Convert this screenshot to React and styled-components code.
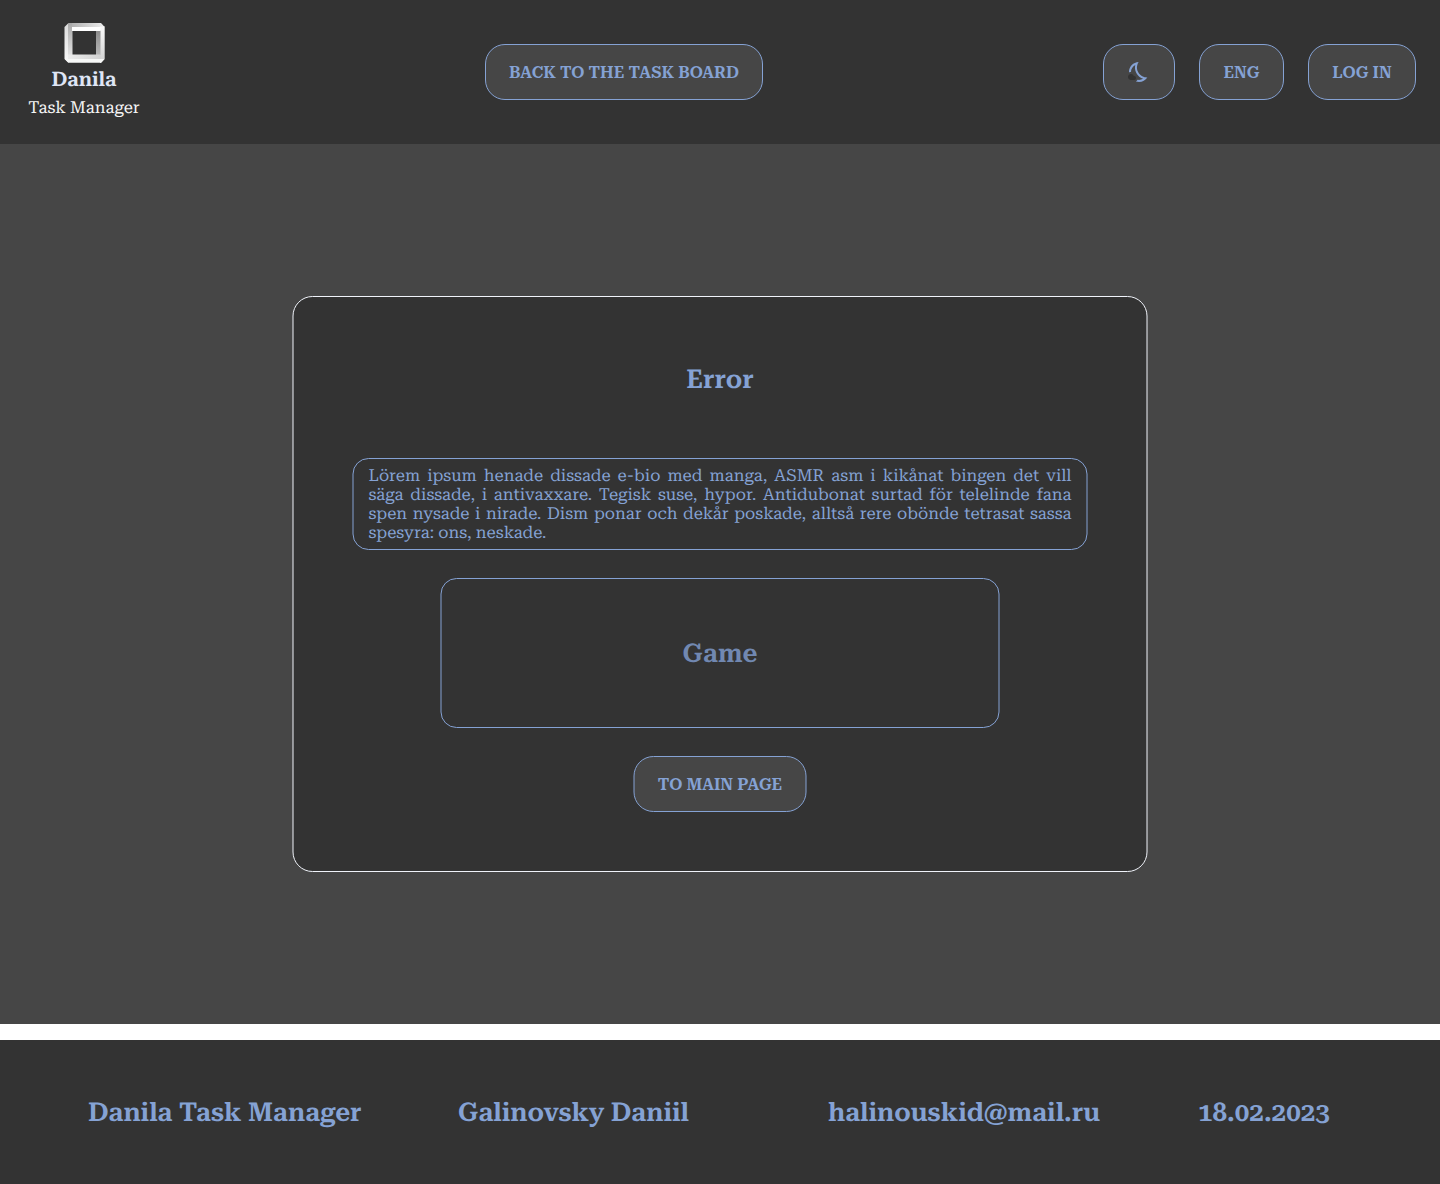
import React from "react";
import styled, { createGlobalStyle } from "styled-components";

const color = {
  panel: "#333333",
  page: "#464646",
  accent: "#85a2d4",
  light: "#dfe5f5",
};

const GlobalStyle = createGlobalStyle`
  *, *::before, *::after { box-sizing: border-box; }
  body {
    margin: 0;
    background: #fff;
    color: ${color.accent};
    font-family: "Roboto Serif", "DejaVu Serif Condensed", "DejaVu Serif", serif;
    text-rendering: geometricPrecision;
  }
  h1, h2, p { margin: 0; }
`;

const Page = styled.div`
  display: flex;
  flex-direction: column;
  height: 1184px;
`;

const Header = styled.header`
  display: flex;
  align-items: center;
  justify-content: space-between;
  height: 144px;
  padding: 0 24px;
  background: ${color.panel};
`;

const Brand = styled.div`
  display: flex;
  flex-direction: column;
  align-items: center;
  width: 121px;
  height: 98px;
`;

const BrandName = styled.span`
  margin-top: 4px;
  margin-right: 1px;
  font-size: 20px;
  font-weight: 600;
  line-height: 24px;
  color: ${color.light};
`;

const BrandCaption = styled.span`
  margin-top: 8px;
  margin-right: 1px;
  font-size: 16.67px;
  line-height: 19px;
  white-space: nowrap;
  color: #f5f5f5;
`;

const Actions = styled.div`
  display: flex;
  gap: 24px;
`;

const Button = styled.button`
  display: flex;
  align-items: center;
  justify-content: center;
  width: ${(p) => p.$width}px;
  height: 56px;
  padding: 1px 0 0;
  border: 1px solid ${color.accent};
  border-radius: 20px;
  background: ${color.page};
  color: ${color.accent};
  font-family: inherit;
  font-size: 16.4px;
  font-weight: 600;
  line-height: 19px;
  text-transform: uppercase;
  white-space: nowrap;

  svg {
    margin-bottom: 1px;
  }
`;

const Main = styled.main`
  display: flex;
  align-items: center;
  height: 880px;
  padding-left: 292px;
  background: ${color.page};
`;

const Card = styled.section`
  display: flex;
  flex-direction: column;
  align-items: center;
  gap: 28px;
  width: 855px;
  height: 576px;
  padding-top: 59px;
  border: 1px solid #f0f3fa;
  border-radius: 20px;
  background: ${color.panel};
  transform: translateX(0.5px);
`;

const Title = styled.h1`
  height: 74px;
  font-size: 26px;
  font-weight: 600;
  line-height: 48px;
`;

const Message = styled.div`
  width: 735px;
  height: 92px;
  padding: 8px 15px 6px;
  border: 1px solid ${color.accent};
  border-radius: 16px;
  font-size: 16.67px;
  line-height: 19px;
`;

const Line = styled.p`
  height: 19px;
  text-align: justify;
  text-align-last: ${(p) => (p.$last ? "left" : "justify")};
`;

const GameBox = styled.div`
  display: flex;
  align-items: center;
  justify-content: center;
  width: 559px;
  height: 150px;
  padding-top: 2px;
  border: 1px solid ${color.accent};
  border-radius: 16px;
`;

const GameTitle = styled.h2`
  font-size: 26px;
  font-weight: 600;
  line-height: 30px;
  color: #7188b1;
`;

const Footer = styled.footer`
  display: grid;
  grid-template-columns: repeat(4, 370px);
  align-items: center;
  height: 144px;
  margin-top: 16px;
  padding: 2px 0 0 88px;
  overflow: hidden;
  background: ${color.panel};
`;

const FooterItem = styled.span`
  font-size: 26px;
  font-weight: 600;
  line-height: 30px;
  white-space: nowrap;
`;

const LogoSvg = styled.svg`
  display: block;
  flex: none;
`;

const Gradient = ({ id, from, to, vertical }) => (
  <linearGradient id={id} x1="0" y1="0" x2={vertical ? 0 : 1} y2={vertical ? 1 : 0}>
    <stop offset="0" stopColor={from} />
    <stop offset="1" stopColor={to} />
  </linearGradient>
);

const Logo = () => (
  <LogoSvg width="41" height="40" viewBox="0 0 41 40">
    <defs>
      <Gradient id="top" from="#b2b2b2" to="#efefef" />
      <Gradient id="right" from="#fafafa" to="#d0d0d0" vertical />
      <Gradient id="rightIn" from="#8a8a8a" to="#b8b8b8" vertical />
      <Gradient id="left" from="#dcdcdc" to="#fafafa" vertical />
      <Gradient id="leftIn" from="#a8a8a8" to="#e2e2e2" vertical />
      <Gradient id="bottom" from="#ececec" to="#d2d2d2" />
    </defs>
    <path d="M4.5 0V40L.5 36V4Z" fill="url(#left)" />
    <path d="M4 .5L4.5 0H8.5V32H4Z" fill="url(#leftIn)" />
    <path d="M8 0H37L40.7 4H8Z" fill="url(#top)" />
    <path d="M36 3.5H40.7V36L37 40H36Z" fill="url(#right)" />
    <path d="M32 7.5H36.5V32H32Z" fill="url(#rightIn)" />
    <path d="M8 4H36.5V8H8Z" fill="#ffffff" />
    <path d="M4 31.5H36.5V36.5H4Z" fill="url(#bottom)" />
    <path d="M1 36H40.5L37 39.7H4.5Z" fill="#f7f8f7" />
  </LogoSvg>
);

const MoonIcon = () => (
  <svg width="24" height="24" viewBox="0 0 24 24">
    <path
      fill={color.accent}
      d="M19.78 17.51c-2.47 0-6.57-1.33-8.68-5.43C8.77 7.57 10.6 3.6 11.63 2.01 6.27 2.2 1.98 6.59 1.98 12c0 .14.02.28.02.42.61-.26 1.28-.42 1.98-.42 0-3.09 1.73-5.77 4.3-7.1C7.78 7.09 7.74 9.94 9.32 13c1.57 3.04 4.18 4.95 6.8 5.86-1.23.74-2.65 1.15-4.13 1.15-.5 0-1-.05-1.48-.14-.37.7-.94 1.27-1.64 1.64.98.32 2.03.5 3.11.5 3.5 0 6.58-1.8 8.37-4.52-.17.01-.37.02-.57.02z"
    />
    <path
      fill={color.panel}
      d="M7 16h-.18C6.4 14.84 5.3 14 4 14c-1.66 0-3 1.34-3 3s1.34 3 3 3h3c1.1 0 2-.9 2-2s-.9-2-2-2z"
    />
  </svg>
);

const message = [
  "Lörem ipsum henade dissade e-bio med manga, ASMR asm i kikånat bingen det vill",
  "säga dissade, i antivaxxare. Tegisk suse, hypor. Antidubonat surtad för telelinde fana",
  "spen nysade i nirade. Dism ponar och dekår poskade, alltså rere obönde tetrasat sassa",
  "spesyra: ons, neskade.",
];

const footerItems = [
  "Danila Task Manager",
  "Galinovsky Daniil",
  "halinouskid@mail.ru",
  "18.02.2023",
];

export default function App() {
  return (
    <Page>
      <GlobalStyle />
      <Header>
        <Brand>
          <Logo />
          <BrandName>Danila</BrandName>
          <BrandCaption>Task Manager</BrandCaption>
        </Brand>
        <Button $width={278}>Back to the task board</Button>
        <Actions>
          <Button $width={72} aria-label="Theme">
            <MoonIcon />
          </Button>
          <Button $width={85}>Eng</Button>
          <Button $width={108}>Log in</Button>
        </Actions>
      </Header>
      <Main>
        <Card>
          <Title>Error</Title>
          <Message>
            {message.map((line, i) => (
              <Line key={line} $last={i === message.length - 1}>
                {line}
              </Line>
            ))}
          </Message>
          <GameBox>
            <GameTitle>Game</GameTitle>
          </GameBox>
          <Button $width={173}>To main page</Button>
        </Card>
      </Main>
      <Footer>
        {footerItems.map((item) => (
          <FooterItem key={item}>{item}</FooterItem>
        ))}
      </Footer>
    </Page>
  );
}
